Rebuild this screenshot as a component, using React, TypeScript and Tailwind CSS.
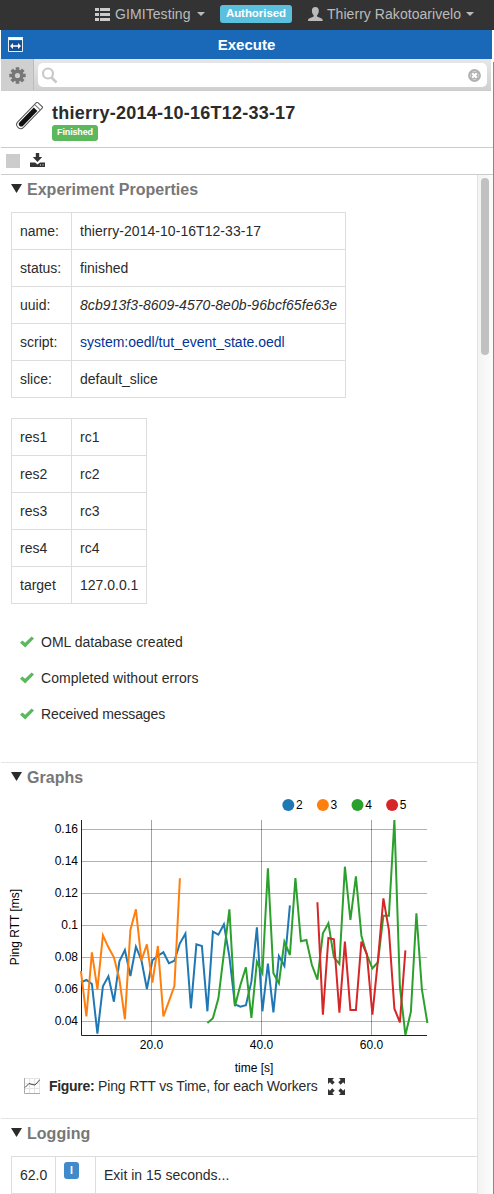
import type { ReactNode } from "react";

type Series = { label: string; color: string; start: number; values: number[] };

// Sample heights are stored in thirds of a pixel below the top of the chart.
const series: Series[] = [
  {
    label: "2",
    color: "#1f77b4",
    start: 0,
    values: [
      577, 570, 582, 731, 589, 559, 635, 514, 480, 558, 470, 510, 597, 511, 497, 487, 520, 512, 460, 431, 655, 463, 468,
      664, 425, 434, 403, 500, 643, 650, 646, 575, 412, 664, 521, 667, 498, 528, 346,
    ],
  },
  {
    label: "3",
    color: "#ff7f0e",
    start: 0,
    values: [543, 679, 487, 598, 436, 472, 502, 568, 688, 420, 358, 511, 463, 578, 468, 679, 634, 588, 265],
  },
  {
    label: "4",
    color: "#2ca02c",
    start: 23,
    values: [
      699, 685, 625, 490, 358, 649, 585, 532, 684, 515, 549, 235, 550, 580, 455, 495, 264, 454, 450, 525, 569, 430, 400,
      502, 522, 230, 390, 259, 437, 495, 535, 517, 377, 377, 90, 590, 735, 665, 370, 598, 699,
    ],
  },
  {
    label: "5",
    color: "#d62728",
    start: 43,
    values: [337, 674, 444, 448, 668, 455, 660, 660, 455, 493, 674, 512, 325, 420, 656, 697, 481],
  },
];

const linePoints = (s: Series) =>
  s.values.map((v, i) => `${(80.9 + 5.5 * (s.start + i)).toFixed(1)},${(v / 3).toFixed(1)}`).join(" ");

function Caret() {
  return <span className="h-0 w-0 border-x-4 border-t-4 border-x-transparent border-t-[#bbb]" />;
}

function Section({ title, children }: { title: string; children: ReactNode }) {
  return (
    <section>
      <h2 className="flex h-[29px] items-center pl-[11px] text-[16px] font-bold tracking-[0.02px] text-[#777]">
        <svg width="11" height="9" className="mr-[5px] -mt-[2px]">
          <path d="M0 0h11L5.5 9z" fill="#2b2b2b" />
        </svg>
        {title}
      </h2>
      {children}
    </section>
  );
}

function PropertyTable({ rows, className }: { rows: [string, ReactNode][]; className: string }) {
  return (
    <table className={`ml-[11px] table-fixed border-collapse leading-5 ${className}`}>
      <tbody>
        {rows.map(([key, value]) => (
          <tr key={key} className="h-[37px]">
            <td className="w-[60px] border border-[#ddd] py-2 pl-2">{key}</td>
            <td className="border border-[#ddd] py-2 pl-2 whitespace-nowrap">{value}</td>
          </tr>
        ))}
      </tbody>
    </table>
  );
}

const messages: [string, string][] = [
  ["OML database created", "tracking-normal"],
  ["Completed without errors", "tracking-[0.05px]"],
  ["Received messages", "tracking-[-0.12px]"],
];

function Chart() {
  return (
    <svg
      width="477"
      height="284"
      viewBox="0 0 477 284"
      className="block overflow-visible"
      fontFamily="'Liberation Sans', Arial, sans-serif"
      fontSize="12"
      fill="#000"
    >
      {series.map((s, i) => (
        <g key={s.label}>
          <circle cx={288.3 + i * 34.6} cy="15" r="6" fill={s.color} />
          <text x={296 + i * 34.6} y="19">
            {s.label}
          </text>
        </g>
      ))}
      {["0.16", "0.14", "0.12", "0.1", "0.08", "0.06", "0.04"].map((label, i) => (
        <g key={label}>
          <path d={`M82 ${39.5 + i * 32}H427`} stroke="#000" strokeOpacity=".3" />
          <text x="78" y={43 + i * 32} textAnchor="end">
            {label}
          </text>
        </g>
      ))}
      {["20.0", "40.0", "60.0"].map((label, i) => (
        <g key={label}>
          <path d={`M${151.5 + i * 110} 30V245`} stroke="#000" strokeOpacity=".36" />
          <text x={151.5 + i * 110} y="259" textAnchor="middle">
            {label}
          </text>
        </g>
      ))}
      <path d="M81.5 30V245.5H427" fill="none" stroke="#222" />
      {series.map((s) => (
        <polyline key={s.label} points={linePoints(s)} fill="none" stroke={s.color} strokeWidth="2" />
      ))}
      <text x="254" y="282" textAnchor="middle">
        time [s]
      </text>
      <text transform="translate(18.500 137) rotate(-90)" textAnchor="middle">
        Ping RTT [ms]
      </text>
    </svg>
  );
}

export default function App() {
  return (
    <div className="h-[1194px] w-[494px] overflow-hidden bg-white font-['Liberation_Sans',Arial,sans-serif] text-[14px] text-[#2b2b2b]">
      <nav className="flex h-[30px] items-center bg-[#333] pb-[2px] text-[#bbb]">
        <svg width="15" height="13" className="ml-[95px]" fill="#ccc">
          <path d="M0 0h4v3H0zM5 0h10v3H5zM0 5h4v3H0zM5 5h10v3H5zM0 10h4v3H0zM5 10h10v3H5z" />
        </svg>
        <span className="ml-[5px] w-[82px] tracking-[0.08px]">GIMITesting</span>
        <Caret />
        <span className="ml-[15px] flex h-[18px] w-[72px] items-center justify-center rounded-[3px] bg-[#5bc0de] text-[11.5px] font-bold tracking-[-0.05px] text-white">
          Authorised
        </span>
        <svg width="15" height="14" viewBox="0 0 15 14" className="ml-4" fill="#bbb">
          <path d="M7.3 0C9.6 0 10.9 1.5 10.8 4c-.1 2-.8 3.4-1.8 4.4v1.1l4.6 2c.8.4 1 .9 1.1 2.5H0c.1-1.600.3-2.100 1.100-2.500l4.600-2V8.400C4.700 7.400 4 6 3.900 4 3.800 1.500 5.100 0 7.300 0z" />
        </svg>
        <span className="ml-1 w-[139px] tracking-[0.05px] whitespace-nowrap">Thierry Rakotoarivelo</span>
        <Caret />
      </nav>

      <div className="flex h-[1164px]">
        <main className="ml-px flex w-[492px] flex-col">
          <header className="flex h-[29px] w-[491px] items-center bg-[#1a69b8] text-white">
            <svg width="15" height="15" viewBox="0 0 15 15" className="ml-[7px]">
              <path d="M0 0h15v3H0z" fill="#fff" />
              <path d="M.5 .5h14v14H.5z" fill="none" stroke="#eee" />
              <path d="M1 4h13v10H1z" fill="#174f93" />
              <path d="M2 9l3-3v2.300h5V6l3 3-3 3V9.700H5V12z" fill="#fff" />
            </svg>
            <h1 className="flex-1 pt-[2px] pr-[22px] text-center text-[15px] font-bold">Execute</h1>
          </header>
          <div className="flex h-[32px] w-[490px] border-b border-[#ccc] bg-linear-to-b from-[#e7e7e7] to-[#d0d0d0]">
            <div className="flex w-[33px] items-center justify-center border-r border-[#bbb] bg-[#d0d0d0] pt-[2px]">
              <svg width="17" height="17" viewBox="0 0 17 17">
                <g stroke="#777" strokeWidth="3.600">
                  <path d="M8.500 .3v16.400M.3 8.500h16.400M2.700 2.700l11.600 11.600M14.300 2.700L2.700 14.300" />
                </g>
                <circle cx="8.500" cy="8.500" r="6" fill="#777" />
                <circle cx="8.500" cy="8.500" r="2.600" fill="#d0d0d0" />
              </svg>
            </div>
            <div className="mt-1 ml-1 flex h-6 w-[449px] items-center justify-between rounded-[5px] bg-white pr-[6px] pl-[3px]">
              <svg width="17" height="17" viewBox="0 0 17 17" fill="none" stroke="#c9c9cc">
                <circle cx="7" cy="6.500" r="5" strokeWidth="2.200" />
                <path d="M10.500 10.500l5 5" strokeWidth="2.700" />
              </svg>
              <svg width="13" height="13" viewBox="0 0 13 13">
                <circle cx="6.500" cy="6.500" r="5.200" fill="#fff" stroke="#b0b0b0" strokeWidth="2.400" />
                <path d="M3 3h7v7H3z" fill="#b0b0b0" />
                <path d="M4.200 4.200l4.600 4.600M8.800 4.200L4.200 8.800" stroke="#fff" strokeWidth="2.200" />
              </svg>
            </div>
          </div>

          <div className="flex h-[57px] border-b border-[#ccc]">
            <svg width="28" height="28" viewBox="0 0 28 28" className="mt-[11px] ml-[14px]">
              <g transform="rotate(44 14 14)">
                <path d="M10 -1.800h8V26c0 5.200-8 5.200-8 0z" fill="#fff" stroke="#555" />
                <path d="M10.500 1.800h7" stroke="#777" />
                <path d="M11.500 4.500h5V25c0 3.500-5 3.500-5 0z" fill="#111" />
              </g>
            </svg>
            <div className="ml-[9px]">
              <div className="mt-[10px] h-[24px] text-[18px] leading-[24px] font-bold tracking-[0.24px] whitespace-nowrap">
                thierry-2014-10-16T12-33-17
              </div>
              <div className="flex h-4 w-[46px] items-center justify-center rounded-[3px] bg-[#5cb85c] text-[9px] font-bold tracking-[-0.15px] text-white">
                Finished
              </div>
            </div>
          </div>

          <div className="flex h-[27px] items-center border-b border-[#ccc]">
            <span className="ml-[5px] h-[14px] w-[14px] bg-[#ccc]" />
            <svg width="15" height="14" viewBox="0 0 15 14" className="-mt-[2px] ml-[10px]" fill="#333">
              <path d="M5.800 0h3.400v4h3L7.500 9 2.800 4h3z" />
              <path d="M0 9.500h5l2.500 2 2.500-2h5V14H0z" />
              <path d="M10 11.500h1v1h-1zM12.500 11.500h1v1h-1z" fill="#fff" />
            </svg>
          </div>

          <div className="flex min-h-0 flex-1">
            <div className="w-[476px] shrink-0 overflow-hidden">
              <div className="-ml-px w-[477px]">
                <div className="h-[588px] border-b border-[#e5e5e5]">
                  <Section title="Experiment Properties">
                    <PropertyTable
                      className="mt-2 w-[335px]"
                      rows={[
                        ["name:", <span className="tracking-[0.05px]">thierry-2014-10-16T12-33-17</span>],
                        ["status:", "finished"],
                        ["uuid:", <em className="tracking-[0.07px]">8cb913f3-8609-4570-8e0b-96bcf65fe63e</em>],
                        ["script:", <a className="text-[#039]">system:oedl/tut_event_state.oedl</a>],
                        ["slice:", "default_slice"],
                      ]}
                    />
                    <PropertyTable
                      className="mt-5 w-[136px]"
                      rows={[
                        ["res1", "rc1"],
                        ["res2", "rc2"],
                        ["res3", "rc3"],
                        ["res4", "rc4"],
                        ["target", "127.0.0.1"],
                      ]}
                    />
                    <ul className="mt-5">
                      {messages.map(([message, tracking]) => (
                        <li key={message} className={`flex h-9 items-center pl-5 ${tracking}`}>
                          <svg width="14" height="12" viewBox="0 0 14 12" className="mr-[7px]">
                            <path d="M0 6.800l2.400-2.400 2.700 2.300L11.600.400 14 2.600 5.200 11.600z" fill="#5cb85c" />
                          </svg>
                          {message}
                        </li>
                      ))}
                    </ul>
                  </Section>
                </div>

                <div className="h-[356px] border-b border-[#e5e5e5]">
                  <Section title="Graphs">
                    <div className="-mt-[2px]">
                      <Chart />
                    </div>
                    <div className="mt-[2px] flex h-5 items-center pl-6">
                      <svg width="16" height="16" viewBox="0 0 16 16" fill="none">
                        <path d="M5.500 0v15M10.500 0v15M15.500 0v15M1 .5h15M1 5.500h15M1 10.500h15" stroke="#e4e4e4" />
                        <path d="M.5 0v15.500H16" stroke="#aaa" />
                        <path d="M1 9.500L5 5.500l3 1 3 .5 5-5.500" stroke="#444" />
                      </svg>
                      <span className="ml-[9px] w-[270px] tracking-[-0.16px] whitespace-nowrap">
                        <b className="tracking-[-0.3px]">Figure:</b> Ping RTT vs Time, for each Workers
                      </span>
                      <svg width="17" height="17" viewBox="0 0 17 17" className="ml-[9px]" fill="#333">
                        {[0, 90, 180, 270].map((angle) => (
                          <path key={angle} transform={`rotate(${angle} 8.500 8.500)`} d="M0 0h6L4.300 1.900l2.400 2.400L4.300 6.700 1.900 4.300 0 6z" />
                        ))}
                      </svg>
                    </div>
                  </Section>
                </div>

                <Section title="Logging">
                  <table className="mt-2 ml-[11px] w-[470px] table-fixed border-collapse">
                    <tbody>
                      <tr className="h-[37px]">
                        <td className="w-[44px] border border-[#ddd] pl-2">62.0</td>
                        <td className="w-[40px] border border-[#ddd] pl-2 align-top">
                          <span className="mt-[5px] flex h-[17px] w-[15px] items-center justify-center rounded-[3px] bg-[#428bca] text-[10.500px] font-bold text-white">
                            I
                          </span>
                        </td>
                        <td className="border border-[#ddd] pl-2">Exit in 15 seconds...</td>
                      </tr>
                    </tbody>
                  </table>
                </Section>
              </div>
            </div>
            <div className="w-4 border-l border-[#e2e2e2] bg-linear-to-r from-[#f3f3f3] to-[#fcfcfc] pt-[3px] pl-[3px]">
              <div className="h-[177px] w-2 rounded-full bg-[#c1c1c1]" />
            </div>
          </div>
        </main>
        <div className="mt-8 w-px bg-[#888]" />
      </div>
    </div>
  );
}
